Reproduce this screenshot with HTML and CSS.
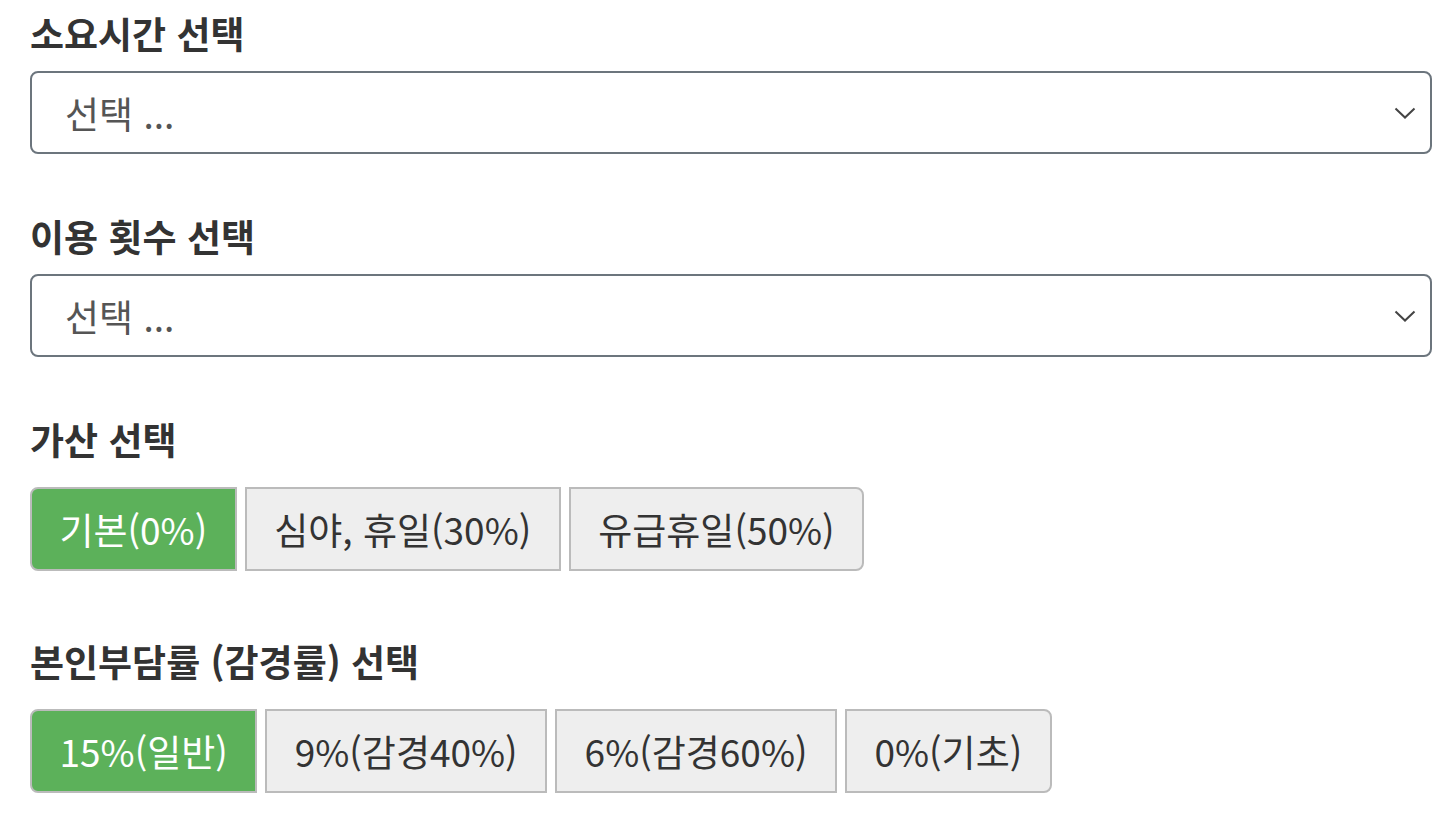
FILE: index.html
```html
<!DOCTYPE html>
<html lang="ko">
<head>
<meta charset="utf-8">
<link rel="stylesheet" href="styles.css">
</head>
<body>
<div class="form">
  <section class="field">
    <h2 class="label">소요시간 선택</h2>
    <div class="select">
      <span class="placeholder">선택 ...</span>
      <svg class="chev" width="22" height="14" viewBox="0 0 22 14"><path d="M1.5 2.5 L11 11.5 L20.5 2.5" fill="none" stroke="#444" stroke-width="2"/></svg>
    </div>
  </section>
  <section class="field">
    <h2 class="label">이용 횟수 선택</h2>
    <div class="select">
      <span class="placeholder">선택 ...</span>
      <svg class="chev" width="22" height="14" viewBox="0 0 22 14"><path d="M1.5 2.5 L11 11.5 L20.5 2.5" fill="none" stroke="#444" stroke-width="2"/></svg>
    </div>
  </section>
  <section class="field">
    <h2 class="label">가산 선택</h2>
    <div class="group">
      <button class="btn active">기본(0%)</button>
      <button class="btn">심야, 휴일(30%)</button>
      <button class="btn">유급휴일(50%)</button>
    </div>
  </section>
  <section class="field">
    <h2 class="label">본인부담률 (감경률) 선택</h2>
    <div class="group">
      <button class="btn active">15%(일반)</button>
      <button class="btn">9%(감경40%)</button>
      <button class="btn">6%(감경60%)</button>
      <button class="btn">0%(기초)</button>
    </div>
  </section>
</div>
</body>
</html>
```

FILE: styles.css
```css
html, body {
  margin: 0;
  padding: 0;
  background: #fff;
}
body {
  font-family: "Noto Sans CJK KR", "Noto Sans", sans-serif;
  color: #333;
}
.form {
  padding: 8px 18px 0 30px;
  display: flex;
  flex-direction: column;
}
.field {
  display: flex;
  flex-direction: column;
  gap: 12px;
  margin-bottom: 57px;
}
.label {
  margin: 0;
  font-size: 37px;
  font-weight: 700;
  line-height: 51px;
  color: #333;
}
.select {
  height: 83px;
  box-sizing: border-box;
  border: 2px solid #6c757d;
  border-radius: 8px;
  padding: 0 14px 0 33px;
  display: flex;
  align-items: center;
  justify-content: space-between;
}
.placeholder {
  font-size: 37px;
  line-height: 48px;
  color: #555;
}
.chev {
  display: block;
}
.group {
  display: flex;
  gap: 8px;
  margin: 10px 0 8px;
}
.btn {
  font-family: inherit;
  font-size: 37px;
  line-height: 48px;
  padding: 16px 27.5px;
  margin: 0;
  border: 2px solid #bbb;
  background: #eee;
  color: #333;
  border-radius: 0;
}
.btn:first-child {
  border-radius: 8px 0 0 8px;
}
.btn:last-child {
  border-radius: 0 8px 8px 0;
}
.btn.active {
  background: #5cb15a;
  color: #fff;
  border-color: #bbb;
}
```
